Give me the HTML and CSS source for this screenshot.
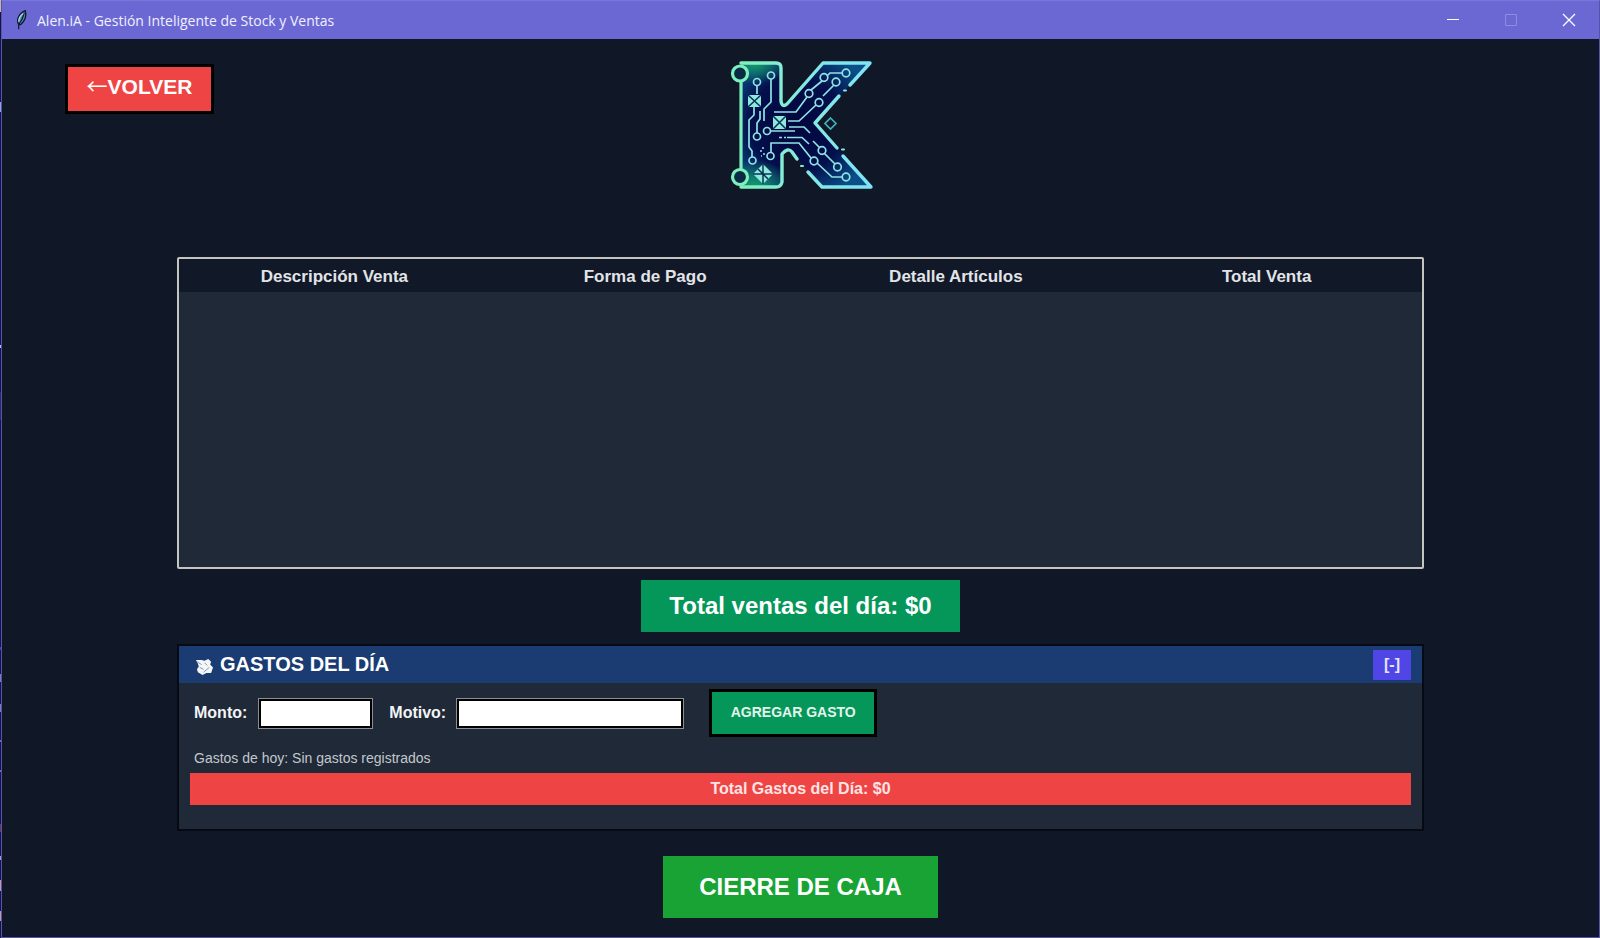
FILE: index.html
```html
<!DOCTYPE html>
<html lang="es">
<head>
<meta charset="utf-8">
<title>Alen.iA - Gestión Inteligente de Stock y Ventas</title>
<link rel="stylesheet" href="styles.css">
</head>
<body>
<div class="window">
  <header class="titlebar">
    <svg class="feather" viewBox="0 0 14 22" aria-hidden="true">
      <path d="M4 16C1 11 4 4 11 1C13 6 11 12 6 16Z" fill="#4f86b4" stroke="#10182c" stroke-width="1.4"/>
      <path d="M10 3C9 8 7 12 4 16L4 21" fill="none" stroke="#10182c" stroke-width="1.3"/>
      <path d="M9 4C6 6 4 9 4 13" fill="none" stroke="#a9d4ee" stroke-width="1.4"/>
    </svg>
    <h1 class="title">Alen.iA - Gestión Inteligente de Stock y Ventas</h1>
    <div class="controls">
      <button class="control" aria-label="Minimizar"><svg viewBox="0 0 12 12"><path d="M0 5.5H12"/></svg></button>
      <button class="control off" aria-label="Maximizar" disabled><svg viewBox="0 0 12 12"><path d="M.5.5H11.5V11.5H.5Z"/></svg></button>
      <button class="control close" aria-label="Cerrar"><svg viewBox="0 0 12 12"><path d="M0 0L12 12M12 0L0 12"/></svg></button>
    </div>
  </header>
  <main class="content">
    <div class="top">
      <button class="back"><span class="arrow">←</span>VOLVER</button>
      <svg class="logo" viewBox="0 0 160 150" role="img" aria-label="K">
        <defs>
          <linearGradient id="edge" gradientUnits="userSpaceOnUse" x1="10" x2="150" y1="0" y2="0"><stop offset="0" stop-color="#7df0b4"/><stop offset=".4" stop-color="#86ecd8"/><stop offset="1" stop-color="#7fe3f8"/></linearGradient>
          <radialGradient id="fill" gradientUnits="userSpaceOnUse" cx="76" cy="74" r="78"><stop offset="0" stop-color="#03063c"/><stop offset=".6" stop-color="#040f4c"/><stop offset="1" stop-color="#0a4f88"/></radialGradient>
          <radialGradient id="green"><stop offset="0" stop-color="#149a6a"/><stop offset="1" stop-color="#149a6a" stop-opacity="0"/></radialGradient>
          <clipPath id="letter"><path d="M20 13H56Q60 13 60 17V52Q61 58 66 54L102 13H149L94 73L150 137H101L72 103Q67 97 61 104V133Q60 137 55 137H20Z"/></clipPath>
        </defs>
        <g clip-path="url(#letter)">
          <path d="M0 0H160V150H0Z" fill="url(#fill)"/>
          <ellipse cx="34" cy="14" rx="32" ry="20" fill="url(#green)"/>
          <ellipse cx="34" cy="136" rx="36" ry="26" fill="url(#green)"/>
        </g>
        <g fill="none" stroke="url(#edge)" stroke-width="3.4" stroke-linecap="round" stroke-linejoin="round">
          <path d="M20 13H55Q60 13 60 18V51Q61 58 66 54L102 13H149L129 35"/>
          <path d="M118 46L94 73L116 98M122 106L150 137H101L87 122"/>
          <path d="M76 109L71 102Q67 97 61 104V132Q60 137 55 137H20"/>
          <path d="M123 40.5H125M80 116H82M121 99.5H123" stroke-width="2"/>
        </g>
        <g fill="#0b2b45" stroke="#7df0bd" stroke-width="3.2">
          <path d="M20 31V119"/>
          <circle cx="19" cy="23.5" r="7.5"/><circle cx="19" cy="127" r="7.5"/>
        </g>
        <g fill="none" stroke="#8fe3e4" stroke-width="1.7">
          <circle cx="36" cy="32" r="3.5"/><circle cx="50" cy="25.5" r="3.5"/><circle cx="36" cy="86.5" r="3.5"/><circle cx="46" cy="81" r="3.5"/><circle cx="31.5" cy="110.5" r="3.5"/><circle cx="49.5" cy="106" r="3.5"/>
          <circle cx="88" cy="43.5" r="3.8"/><circle cx="103" cy="27.5" r="3.8"/><circle cx="125" cy="23" r="3.8"/><circle cx="115" cy="32" r="3.8"/><circle cx="98" cy="52.5" r="3.8"/>
          <circle cx="101" cy="100.5" r="3.8"/><circle cx="93" cy="111" r="3.8"/><circle cx="116.5" cy="117" r="3.8"/><circle cx="125" cy="127" r="3.8"/>
          <path d="M36 36V44M50 29V52L43 59V71M39 61V69L36 73V83M33 57V65L28 70V97L31 101V107"/>
          <path d="M53 62H75L86 47M90 40L101 31M106 26L109 23H121M113 35L102 46M95 55L78 71H67"/>
          <path d="M50 81H74M68 77H83L89 83M50 102V93H78L90 108M66 87.5H81L88 94M92 91L99 98M103 103L114 114M96 113L111 127H121"/>
          <path d="M58 87.5H61M63 87.5H65"/>
          <path d="M109.5 68L115 73.5L109.5 79L104 73.5Z" stroke="#3fb4bb"/>
          <path d="M41 98H43M39 101H41M42 104H44M40 106H41" stroke-width="1.5"/>
        </g>
        <path d="M27 45H40V57H27ZM52 66H65V79H52ZM42 114L52 124L42 134L32 124Z" fill="#8fe9d9"/>
        <path d="M27 45L40 57M40 45L27 57M52 66L65 79M65 66L52 79M42 114V134M32 124H52M37 119L47 129" fill="none" stroke="#06305a" stroke-width="1.5"/>
      </svg>
    </div>
    <div class="sales">
      <table class="grid">
        <thead><tr><th>Descripción Venta</th><th>Forma de Pago</th><th>Detalle Artículos</th><th>Total Venta</th></tr></thead>
        <tbody></tbody>
      </table>
    </div>
    <div class="sales-total">Total ventas del día: $0</div>
    <section class="expenses">
      <div class="expenses-head">
        <svg class="money" viewBox="0 0 18 18" aria-hidden="true"><path d="M0 2L6 2L9 3L13 1L16 4L15 7L18 10L16 16L11 16L7 18L2 15L1 12L3 9L2 6Z" fill="#f4f6fa"/><path d="M1 4L6 7M4 10L8 12M9 5L12 8M8 15L14 10" fill="none" stroke="#8290ae" stroke-width="1"/></svg>
        <h2 class="expenses-title">GASTOS DEL DÍA</h2>
        <button class="toggle">[-]</button>
      </div>
      <form class="entry">
        <label class="label" for="monto">Monto:</label>
        <input class="box amount" id="monto" type="text">
        <label class="label" for="motivo">Motivo:</label>
        <input class="box reason" id="motivo" type="text">
        <button class="add" type="button">AGREGAR GASTO</button>
      </form>
      <p class="today">Gastos de hoy: Sin gastos registrados</p>
      <div class="expenses-total">Total Gastos del Día: $0</div>
    </section>
    <button class="close-day">CIERRE DE CAJA</button>
  </main>
</div>
</body>
</html>
```
FILE: styles.css
```css
* { box-sizing: border-box; }
body {
  margin: 0;
  background: linear-gradient(#c9b3a4 0 12px, #15134a 12px 102px, #8ea6dc 102px 112px, #15134a 112px 345px, #b9b9dc 345px 348px, #15134a 348px 392px, #2b2a63 392px 420px, #15134a 420px 647px, #2c48b4 647px 650px, #15134a 650px 674px, #7f7ab0 674px 682px, #15134a 682px 704px, #7f7ab0 704px 712px, #15134a 712px 740px, #8d6d96 740px 742px, #15134a 742px 770px, #8d6d96 770px 772px, #15134a 772px 824px, #6b3a55 824px 832px, #15134a 832px 856px, #a99bc0 856px 860px, #15134a 860px 880px, #c09aa4 880px 891px, #15134a 891px 911px, #c09aa4 911px 921px, #15134a 921px);
  font-family: "Liberation Sans", Arial, sans-serif;
  color: #fff;
}
button { font-family: inherit; font-weight: bold; color: #fff; padding: 0; border: 0; }
.window { min-height: 100vh; margin-left: 1px; background: #101727; border: 1px solid #5754a8; border-top-color: #7a77dc; display: flex; flex-direction: column; }
.titlebar { height: 38px; background: #6b68d4; display: flex; align-items: center; padding-left: 13px; }
.feather { width: 13px; height: 22px; }
.title { margin: 0; padding-left: 9px; flex: 1; font: 400 14px "Open Sans", "Noto Sans", sans-serif; color: #f1f0ff; }
.controls { display: flex; margin-right: 1px; }
.control { width: 58px; height: 38px; background: none; display: grid; place-items: center; }
.control svg { width: 12px; height: 12px; fill: none; stroke: #fff; stroke-width: 1; overflow: visible; }
.off svg { stroke: #8d8be4; }
.close svg { stroke-width: 1.3; }
.content { flex: 1; display: flex; flex-direction: column; align-items: center; padding: 11px 175px 18px; }
.top { align-self: stretch; display: flex; justify-content: center; height: 207px; }
.back { width: 149px; height: 50px; margin: 14px 0 0 -112px; padding-bottom: 4px; background: #ef4444; border: 3px solid #000; font-size: 21px; line-height: 24px; }
.arrow { font-family: "Noto Sans CJK SC", sans-serif; font-weight: 400; font-size: 21px; line-height: 20px; }
.logo { width: 160px; height: 150px; margin: 0 auto; }
.top::after { content: ""; width: 37px; }
.sales { align-self: stretch; height: 312px; border: 2px solid #c4c4c0; border-radius: 2px; background: #1f2937; }
.grid { width: 100%; border-collapse: collapse; table-layout: fixed; }
.grid th { height: 33px; padding: 2px 0 0; background: #111827; font-size: 17px; color: #e2e4e8; }
.sales-total { margin-top: 11px; padding: 0 28px; line-height: 52px; background: #059659; font-weight: bold; font-size: 24px; }
.expenses { align-self: stretch; margin-top: 12px; height: 187px; border: 2px solid #060a14; background: #1f2937; }
.expenses-head { height: 37px; padding: 0 11px 0 17px; background: #1a3c73; display: flex; align-items: center; gap: 7px; }
.money { width: 17px; height: 17px; margin-top: 4px; }
.expenses-title { margin: 0; flex: 1; font-size: 20px; }
.toggle { width: 38px; height: 30px; background: #4f46e5; font-size: 16px; color: #e4e4ff; }
.entry { display: flex; align-items: center; padding: 6px 15px 0; }
.label { font-weight: bold; font-size: 16px; color: #f3f4f6; }
.box { height: 29px; border: 2px solid #000; outline: 1px solid #8b8e93; background: #fff; border-radius: 0; padding: 0 4px; font-size: 16px; }
.amount { width: 113px; margin: 0 17px 0 12px; }
.reason { width: 226px; margin: 0 26px 0 11px; }
.add { width: 168px; height: 48px; padding-bottom: 2px; background: #059659; border: 3px solid #000; font-size: 14px; color: #e3f5ec; }
.today { margin: 0; padding: 11px 15px 5px; font-size: 14px; line-height: 20px; color: #c3c7cd; }
.expenses-total { margin: 0 11px; line-height: 32px; background: #ef4444; text-align: center; font-weight: bold; font-size: 16px; color: #fde5e5; }
.close-day { margin-top: 25px; width: 275px; height: 62px; background: #19a334; font-size: 24px; }
```
